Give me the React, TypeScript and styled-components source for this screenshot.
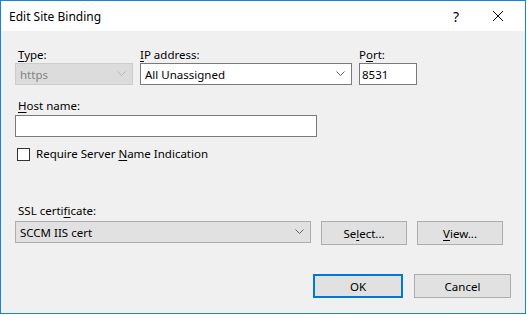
import React from 'react';
import styled, {createGlobalStyle} from 'styled-components';

const Global = createGlobalStyle`
  html, body {
    margin: 0;
    padding: 0;
    background: white;
  }
  body {
    font-family: "Noto Sans", "Liberation Sans", sans-serif;
    font-size: 11.5px;
    color: #000;
  }
`;

const Window = styled.div`
  width: 526px;
  height: 314px;
  box-sizing: border-box;
  border: 1px solid #1883d7;
  display: flex;
  flex-direction: column;
  background: #f0f0f0;
`;

const TitleBar = styled.div`
  height: 30px;
  background: white;
  display: flex;
  align-items: center;
  padding: 0 6px 0 8px;
`;

const Title = styled.span`
  flex: 1;
  font-size: 12px;
`;

const TitleButton = styled.div`
  width: 42px;
  height: 30px;
  display: flex;
  align-items: center;
  justify-content: center;
  font-size: 14px;
`;

const Body = styled.div`
  flex: 1;
  padding: 16px 0 0 14px;
  display: flex;
  flex-direction: column;
`;

const TopRow = styled.div`
  display: flex;
  gap: 7px;
`;

const Field = styled.div<{ $w: number }>`
  width: ${p => p.$w}px;
  display: flex;
  flex-direction: column;
`;

const Label = styled.div<{ $indent?: number; $top?: number; $gap?: number }>`
  line-height: 16px;
  padding-left: ${p => p.$indent ?? 0}px;
  margin-top: ${p => p.$top ?? 0}px;
  margin-bottom: ${p => p.$gap ?? 0}px;
`;

const Combo = styled.div<{ $w: number; $kind: 'disabled' | 'normal' | 'flat' }>`
  width: ${p => p.$w}px;
  height: 22px;
  box-sizing: border-box;
  display: flex;
  align-items: center;
  padding: 0 6px 0 4px;
  border: 1px solid ${p => (p.$kind === 'disabled' ? '#cccccc' : p.$kind === 'flat' ? '#adadad' : '#7a7a7a')};
  background: ${p => (p.$kind === 'normal' ? '#ffffff' : p.$kind === 'flat' ? '#e1e1e1' : '#dcdcdc')};
  color: ${p => (p.$kind === 'disabled' ? '#838383' : '#000')};
  > span {
    flex: 1;
  }
`;

const TextBox = styled.div<{ $w: number }>`
  width: ${p => p.$w}px;
  height: 22px;
  box-sizing: border-box;
  border: 1px solid #7a7a7a;
  background: white;
  display: flex;
  align-items: center;
  padding-left: 2px;
`;

const CheckRow = styled.label`
  display: flex;
  align-items: center;
  gap: 6px;
  margin: 9px 0 0 2px;
  line-height: 16px;
`;

const Box = styled.span`
  width: 13px;
  height: 13px;
  box-sizing: border-box;
  border: 1px solid #333;
  background: white;
`;

const SslRow = styled.div`
  display: flex;
  align-items: flex-start;
  gap: 10px;
`;

const Button = styled.div<{ $w: number; $default?: boolean }>`
  width: ${p => p.$w}px;
  height: 24px;
  box-sizing: border-box;
  border: ${p => (p.$default ? '2px solid #0078d7' : '1px solid #adadad')};
  background: #e1e1e1;
  display: flex;
  align-items: center;
  justify-content: center;
`;

const Footer = styled.div`
  display: flex;
  justify-content: flex-end;
  gap: 11px;
  padding-right: 14px;
  margin-top: 29px;
`;

const U = styled.span`
  text-decoration: underline;
  text-underline-offset: 2px;
`;

function Chevron({color}: { color: string }) {
  return (
    <svg width="9" height="6" viewBox="0 0 9 6">
      <polyline points="0.5,0.5 4.5,4.5 8.5,0.5" fill="none" stroke={color} strokeWidth="1"/>
    </svg>
  );
}

export default function App() {
  return (
    <>
      <Global/>
      <Window>
        <TitleBar>
          <Title>Edit Site Binding</Title>
          <TitleButton>?</TitleButton>
          <TitleButton>
            <svg width="12" height="12" viewBox="0 0 12 12">
              <path d="M1 1 L11 11 M11 1 L1 11" stroke="#000" strokeWidth="1"/>
            </svg>
          </TitleButton>
        </TitleBar>
        <Body>
          <TopRow>
            <Field $w={118}>
              <Label $indent={3}><U>T</U>ype:</Label>
              <Combo $w={118} $kind="disabled"><span>https</span><Chevron color="#b5b5b5"/></Combo>
            </Field>
            <Field $w={212}>
              <Label><U>I</U>P address:</Label>
              <Combo $w={212} $kind="normal"><span>All Unassigned</span><Chevron color="#606060"/></Combo>
            </Field>
            <Field $w={58}>
              <Label>P<U>o</U>rt:</Label>
              <TextBox $w={58}>8531</TextBox>
            </Field>
          </TopRow>
          <Label $indent={3} $top={13} $gap={1}><U>H</U>ost name:</Label>
          <TextBox $w={302}/>
          <CheckRow>
            <Box/>
            <span>Require Server <U>N</U>ame Indication</span>
          </CheckRow>
          <Label $indent={3} $top={41} $gap={2}>SSL certi<U>f</U>icate:</Label>
          <SslRow>
            <Combo $w={296} $kind="flat"><span>SCCM IIS cert</span><Chevron color="#606060"/></Combo>
            <Button $w={86}>Se<U>l</U>ect...</Button>
            <Button $w={86}><U>V</U>iew...</Button>
          </SslRow>
          <Footer>
            <Button $w={90} $default>OK</Button>
            <Button $w={97}>Cancel</Button>
          </Footer>
        </Body>
      </Window>
    </>
  );
}
